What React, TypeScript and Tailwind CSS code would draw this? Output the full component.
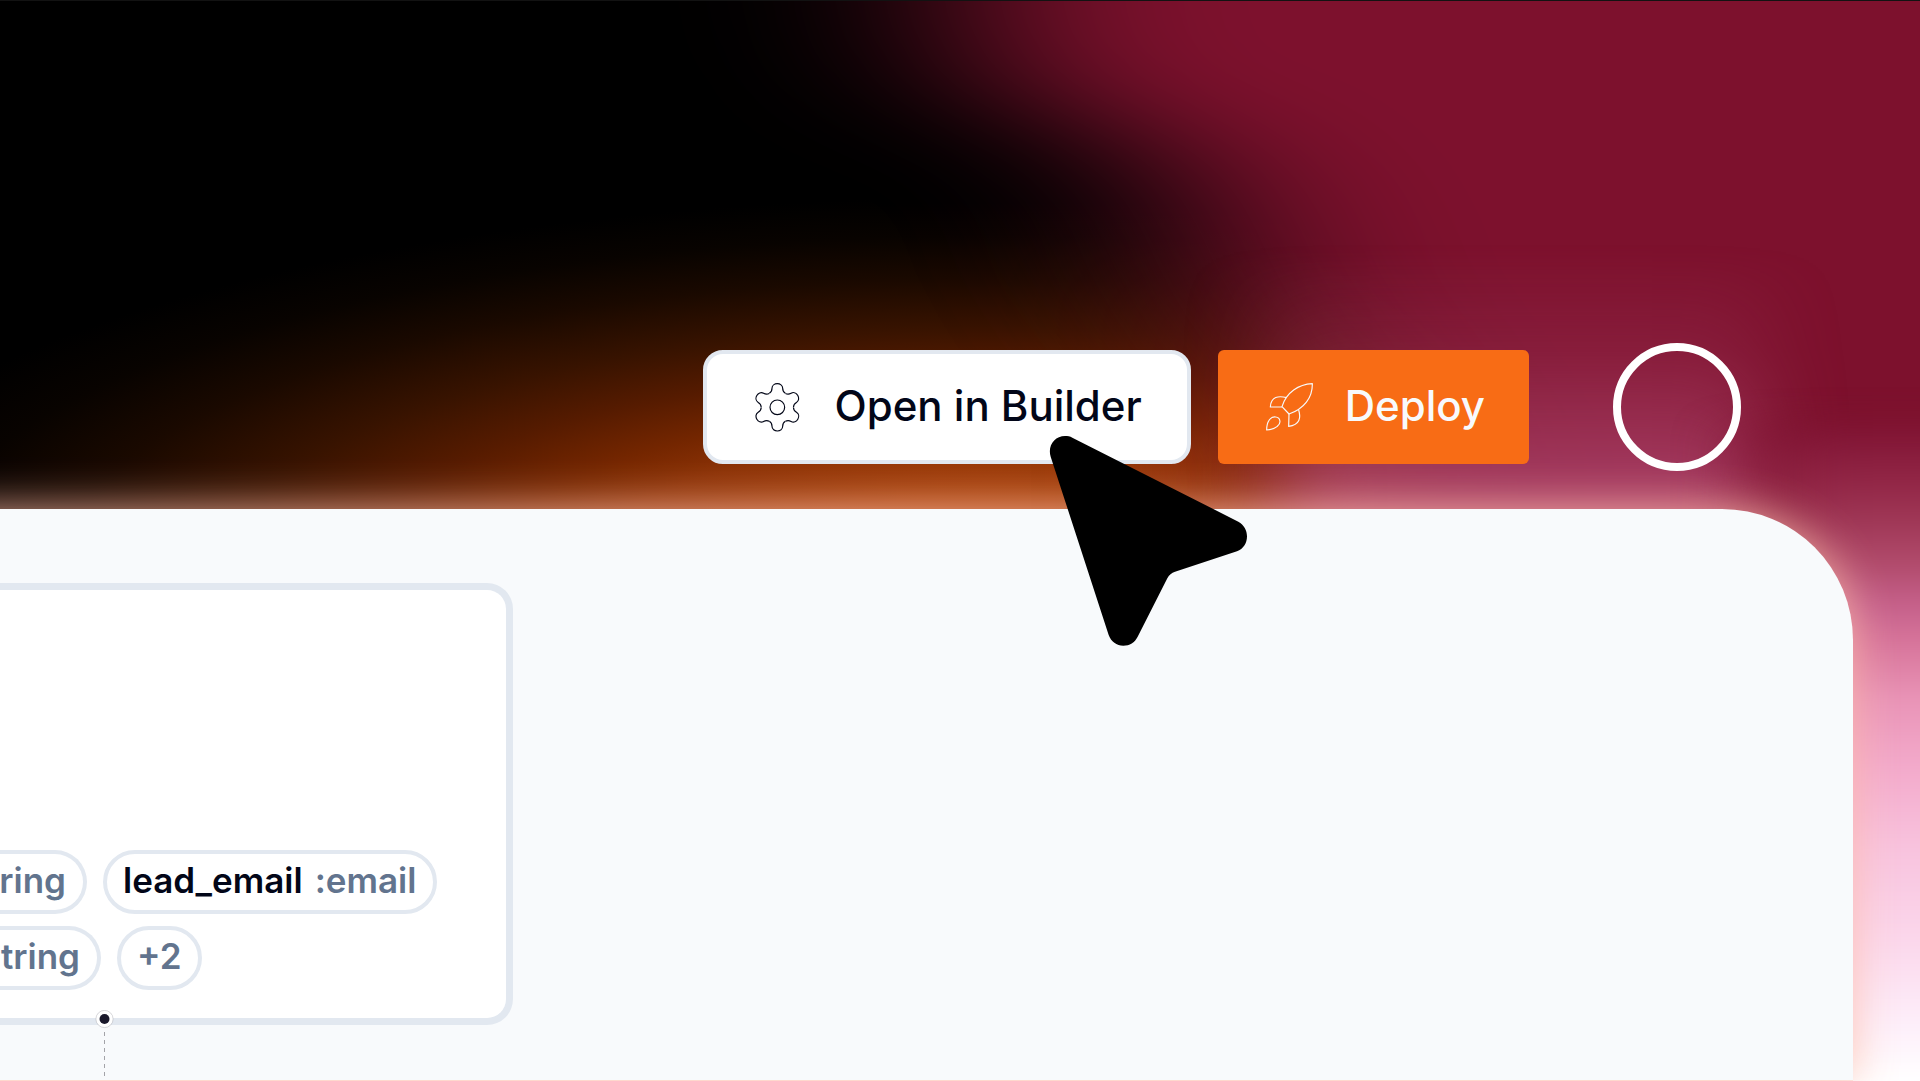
import type { ReactNode } from "react";

const Backdrop = () => (
  <svg
    className="absolute inset-0 -z-10 h-full w-full"
    viewBox="0 0 1920 1081"
    preserveAspectRatio="none"
    aria-hidden="true"
  >
    <defs>
      <filter id="soft" x="-50%" y="-50%" width="200%" height="200%" colorInterpolationFilters="sRGB">
        <feGaussianBlur stdDeviation="125 36" />
      </filter>
      <filter id="glow" x="-50%" y="-50%" width="200%" height="200%" colorInterpolationFilters="sRGB">
        <feGaussianBlur stdDeviation="40 8" />
      </filter>
      <linearGradient id="fade" gradientUnits="userSpaceOnUse" x1="0" y1="400" x2="0" y2="1081">
        <stop offset="0" stopColor="#7d112d" stopOpacity="0" />
        <stop offset="0.06" stopColor="#841838" />
        <stop offset="0.12" stopColor="#922646" />
        <stop offset="0.18" stopColor="#a03857" />
        <stop offset="0.24" stopColor="#b14b6c" />
        <stop offset="0.3" stopColor="#c5608a" />
        <stop offset="0.36" stopColor="#d8769c" />
        <stop offset="0.44" stopColor="#e994b7" />
        <stop offset="0.54" stopColor="#f3aacb" />
        <stop offset="0.66" stopColor="#f8c3de" />
        <stop offset="0.8" stopColor="#fbd8ec" />
        <stop offset="0.92" stopColor="#fdeffa" />
        <stop offset="1" stopColor="#ffffff" />
      </linearGradient>
      <linearGradient id="haze" gradientUnits="userSpaceOnUse" x1="0" y1="250" x2="0" y2="510">
        <stop offset="0" stopColor="#b8507a" stopOpacity="0" />
        <stop offset="0.38" stopColor="#b8507a" stopOpacity="0.18" />
        <stop offset="0.73" stopColor="#b8507a" stopOpacity="0.5" />
        <stop offset="1" stopColor="#b8507a" stopOpacity="0.78" />
      </linearGradient>
      <radialGradient
        id="ember"
        gradientUnits="userSpaceOnUse"
        cx="0"
        cy="0"
        r="1"
        gradientTransform="translate(1000 570) scale(1240 385)"
      >
        <stop offset="0" stopColor="#bc4a0c" />
        <stop offset="0.2" stopColor="#a8420c" />
        <stop offset="0.34" stopColor="#8c3206" />
        <stop offset="0.42" stopColor="#742600" />
        <stop offset="0.52" stopColor="#561b00" />
        <stop offset="0.63" stopColor="#381300" />
        <stop offset="0.76" stopColor="#1a0900" />
        <stop offset="0.87" stopColor="#080300" />
        <stop offset="0.97" stopColor="#000000" />
      </radialGradient>
    </defs>
    <rect width="1920" height="1081" fill="#000000" />
    <rect width="1920" height="1081" fill="url(#ember)" />
    <path
      d="M960 -300 H2500 V1500 H1330 V460 C1320 400 1250 340 1215 270 C1195 210 1180 150 1080 120 C1000 100 965 80 960 -40 Z"
      fill="#7d112d"
      filter="url(#soft)"
    />
    <path d="M1280 700 V480 C1275 420 1265 380 1260 250 H1760 V700 Z" fill="url(#haze)" filter="url(#glow)" />
    <rect x="1765" y="400" width="500" height="900" fill="url(#fade)" filter="url(#glow)" />
    <rect y="1000" width="1853" height="81" fill="#fdeae6" />
  </svg>
);

const GearIcon = () => (
  <svg className="h-[51px] w-[51px]" viewBox="-76 -76 153 153" fill="none" stroke="#020617" strokeWidth="3.5">
    {[0, 60, 120, 180, 240, 300].map((angle) => (
      <path
        key={angle}
        transform={`rotate(${angle})`}
        d="M-24 -42 C-18 -45.5 -16 -51 -16 -57 C-16 -66 -8 -71 0 -71 C8 -71 16 -66 16 -57 C16 -51 18 -45.5 24 -42"
      />
    ))}
    <circle r="22" />
  </svg>
);

const RocketIcon = () => (
  <svg
    className="h-[51px] w-[51px]"
    viewBox="36 35 153 153"
    fill="none"
    stroke="#f8fafc"
    strokeWidth="3.5"
    strokeLinejoin="round"
  >
    <path d="M187 40 C146 42 109 66 96 109 L117 131 C162 115 188 82 187 40 Z" />
    <path d="M110 82 C86 76 63 78 61 110 H96" />
    <path d="M146 119 C153 142 150 164 116 168 L117 131" />
    <path d="M50 179 C50 151 63 138 77 140 C92 142 94 159 82 168 C75 174 62 178 50 179 Z" />
  </svg>
);

const Cursor = () => (
  <svg
    className="pointer-events-none absolute left-[345px] top-[85px] h-[212px] w-[201px]"
    viewBox="54 45 603 636"
    aria-hidden="true"
  >
    <path
      d="M127 53 L625 305 C642 314 651 331 651 349 C651 370 640 387 621 394 L435 455 C425 458 417 465 412 475 L323 650 C314 668 299 677 280 677 C260 677 243 665 236 645 L62 110 C52 77 74 48 105 48 C113 48 120 49 127 53 Z"
      fill="#000000"
    />
  </svg>
);

const Pill = ({ children }: { children: ReactNode }) => (
  <span className="flex h-16 items-center gap-3 whitespace-nowrap rounded-full border-4 border-slate-200 pb-1 pl-4 pr-[17px]">
    {children}
  </span>
);

const App = () => {
  return (
    <div className="relative isolate flex min-h-screen flex-col overflow-hidden border-t border-[#121212] pb-px font-['Inter',sans-serif]">
      <Backdrop />

      <header className="relative z-10 flex items-center justify-end pb-[38px] pr-[179px] pt-[342px]">
        <div className="relative mr-[27px]">
          <button
            type="button"
            className="flex h-[114px] items-center gap-8 whitespace-nowrap rounded-[20px] border-4 border-slate-200 bg-white px-[45px] text-[42px] font-medium text-slate-950"
          >
            <GearIcon />
            <span className="pb-1">Open in Builder</span>
          </button>
          <Cursor />
        </div>
        <button
          type="button"
          className="mr-[84px] flex h-[114px] items-center gap-8 rounded-md bg-[#f86c15] px-11 text-[42px] font-medium text-slate-50"
        >
          <RocketIcon />
          <span className="pb-1">Deploy</span>
        </button>
        <button type="button" aria-label="Account" className="size-32 rounded-full border-8 border-white" />
      </header>

      <main className="-ml-20 mr-[67px] flex-1 rounded-tr-[131px] bg-slate-50 pl-20 pt-[74px] shadow-[0_0_44px_rgba(255,190,170,0.85)]">
        <section className="relative w-[513px] rounded-r-[26px] border-y-[7px] border-r-[7px] border-slate-200 bg-white pb-7 pt-[260px] text-[35px] font-semibold text-slate-500">
          <div className="flex flex-col gap-3">
            <div className="flex gap-4">
              <span className="flex h-16 w-[87px] items-center justify-end rounded-r-full border-y-4 border-r-4 border-slate-200 pb-1 pr-[17px]">
                ring
              </span>
              <Pill>
                <span className="text-slate-950">lead_email</span>
                <span>:email</span>
              </Pill>
            </div>
            <div className="flex gap-4">
              <span className="flex h-16 w-[101px] items-center justify-end rounded-r-full border-y-4 border-r-4 border-slate-200 pb-1 pr-[17px]">
                tring
              </span>
              <Pill>+2</Pill>
            </div>
          </div>

          {/* output handle and its connector */}
          <svg className="absolute -bottom-[63px] left-[95px] h-[71px] w-[19px]" viewBox="0 0 19 71" aria-hidden="true">
            <path d="M9.5 22 V68" stroke="#a3a3a8" strokeDasharray="4 4" />
            <circle cx="9.5" cy="9" r="8.6" fill="#ffffff" stroke="#b1b1b7" strokeWidth="0.5" />
            <circle cx="9.5" cy="9" r="5" fill="#1a192b" />
          </svg>
        </section>
      </main>
    </div>
  );
};

export default App;
